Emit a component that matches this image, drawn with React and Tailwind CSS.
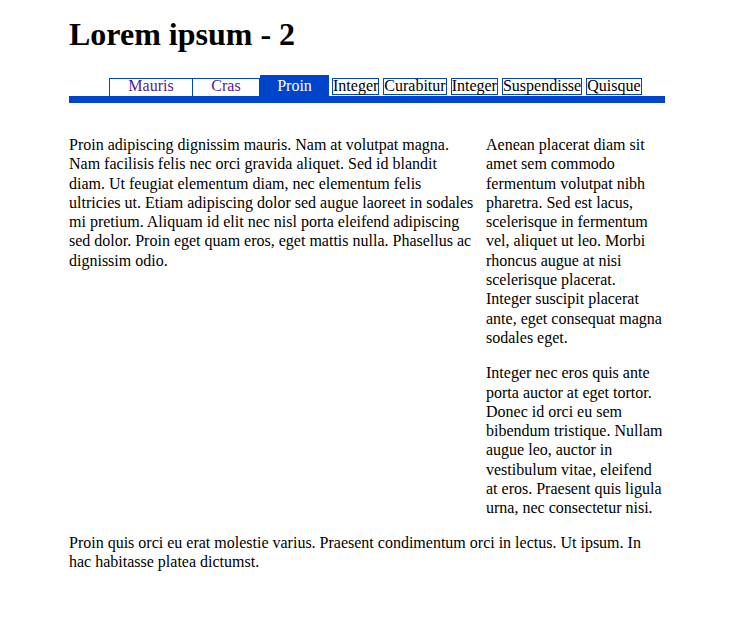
const tabs = ["Integer", "Curabitur", "Integer", "Suspendisse", "Quisque"];

const App = () => {
  return (
    <div
      className="min-h-[630px] bg-white text-black pl-[69px] pt-[16px]"
      style={{ fontFamily: '"Liberation Serif", "Times New Roman", serif' }}
    >
      <div className="w-[596px]">
        {/* HEADING */}
        <h1 className="text-[32px] font-bold leading-[37px]">Lorem ipsum - 2</h1>

        {/* TABS */}
        <div className="mt-[22px] flex items-end h-[21px] pl-[40px] text-[16px]">
          <span className="w-[84px] h-[18px] leading-[14px] text-center text-[#551a8b] border-t border-l border-r border-[#0044cc]">
            Mauris
          </span>
          <span className="w-[67px] h-[18px] leading-[14px] text-center text-[#551a8b] border-t border-r border-[#0044cc]">
            Cras
          </span>
          <span className="w-[69px] h-[21px] pt-[2px] leading-[18px] text-center text-white bg-[#0044cc]">
            Proin
          </span>
          <div className="ml-[3px] mb-[1px] flex gap-[4px]">
            {tabs.map((t, i) => (
              <span
                key={i}
                className="h-[17px] leading-[14px] border border-[#0044cc]"
              >
                {t}
              </span>
            ))}
          </div>
        </div>
        <div className="h-[7px] bg-[#0044cc]" />

        {/* CONTENT */}
        <div className="mt-[32px] flex gap-[10px] text-[16px] leading-[19.3px]">
          <p className="w-[407px]">
            Proin adipiscing dignissim mauris. Nam at volutpat magna. Nam
            facilisis felis nec orci gravida aliquet. Sed id blandit diam. Ut
            feugiat elementum diam, nec elementum felis ultricies ut. Etiam
            adipiscing dolor sed augue laoreet in sodales mi pretium. Aliquam id
            elit nec nisl porta eleifend adipiscing sed dolor. Proin eget quam
            eros, eget mattis nulla. Phasellus ac dignissim odio.
          </p>
          <div className="w-[178px] flex flex-col gap-4">
            <p>
              Aenean placerat diam sit amet sem commodo fermentum volutpat nibh
              pharetra. Sed est lacus, scelerisque in fermentum vel, aliquet ut
              leo. Morbi rhoncus augue at nisi scelerisque placerat. Integer
              suscipit placerat ante, eget consequat magna sodales eget.
            </p>
            <p>
              Integer nec eros quis ante porta auctor at eget tortor. Donec id
              orci eu sem bibendum tristique. Nullam augue leo, auctor in
              vestibulum vitae, eleifend at eros. Praesent quis ligula urna, nec
              consectetur nisi.
            </p>
          </div>
        </div>

        {/* FOOTER */}
        <p className="mt-[15px] text-[16px] leading-[19.3px]">
          Proin quis orci eu erat molestie varius. Praesent condimentum orci in
          lectus. Ut ipsum. In hac habitasse platea dictumst.
        </p>
      </div>
    </div>
  );
};

export default App;
